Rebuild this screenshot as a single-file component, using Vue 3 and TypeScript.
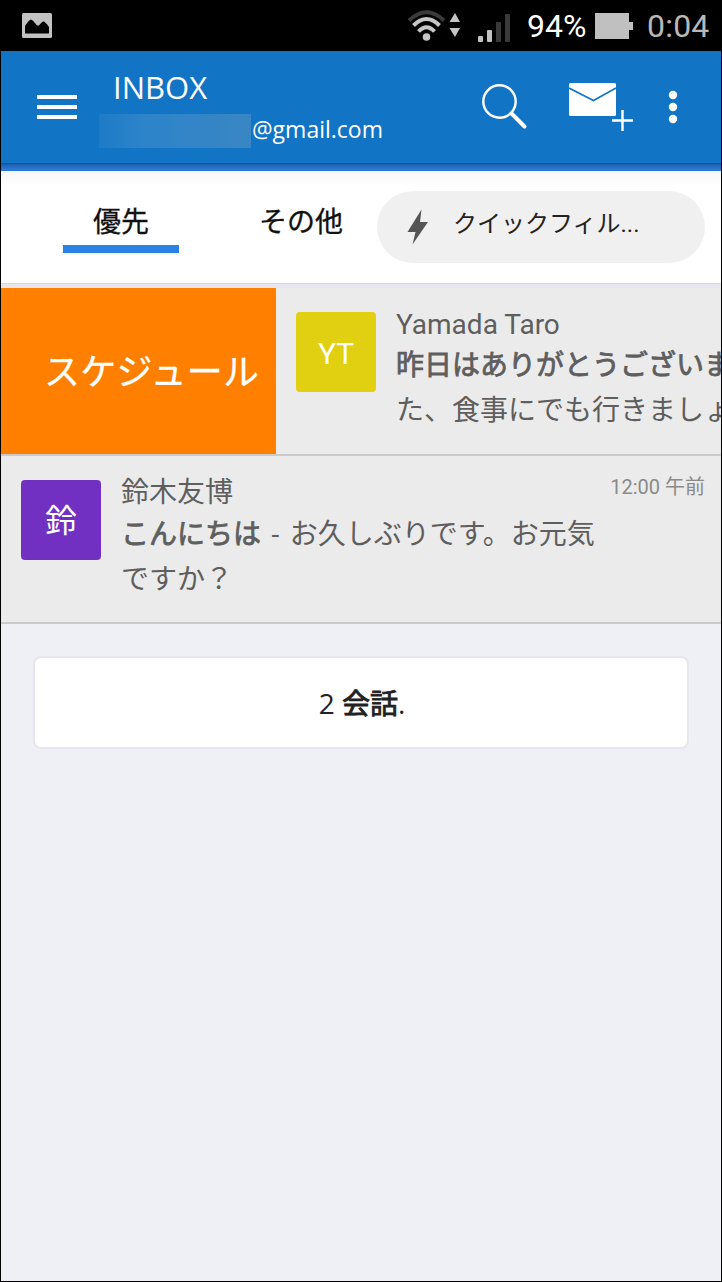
<script setup lang="ts">
interface Bar {
  x: number
  height: number
  active: boolean
}

const signalBars: Bar[] = [
  { x: 0, height: 6, active: true },
  { x: 9, height: 12, active: true },
  { x: 18, height: 20, active: false },
  { x: 27, height: 28, active: false },
]
</script>

<template>
  <div class="phone">
    <div class="status">
      <svg class="picture" width="30" height="25" viewBox="0 0 30 25">
        <rect width="30" height="25" rx="1.5" fill="#c2c2c2" />
        <path d="M3 20V13Q7 6.500 9 6.500Q10.500 6.500 15 12.500H17Q20 8.500 21.500 8.500Q23 8.500 27 14V20Q27 20.500 26 20.500H4Q3 20.500 3 20Z" fill="#000" />
      </svg>
      <div class="spacer"></div>
      <svg class="wifi" width="54" height="34" viewBox="0 0 54 34" fill="none">
        <path d="M2 12.500Q19.500 -4 37 12.500" stroke="#3a3a3a" stroke-width="4" />
        <path d="M6.500 17.500Q19.500 4.500 32.500 17.500" stroke="#c6c6c6" stroke-width="4" />
        <path d="M11.500 23.500Q19.500 15 27.500 23.500" stroke="#c6c6c6" stroke-width="4" />
        <circle cx="19.500" cy="29" r="3.800" fill="#c6c6c6" />
        <path d="M42.500 14L48 5L53 14ZM42.500 20H53L48 29Z" fill="#c6c6c6" />
      </svg>
      <svg class="signal" width="33" height="29" viewBox="0 0 33 29">
        <rect
          v-for="bar in signalBars"
          :key="bar.x"
          :x="bar.x"
          :y="28 - bar.height"
          width="5"
          :height="bar.height"
          rx="1"
          :fill="bar.active ? '#c2c2c2' : '#3a3a3a'"
        />
      </svg>
      <span class="percent">94%</span>
      <svg class="battery" width="38" height="26" viewBox="0 0 38 26">
        <path d="M0 0H34V9H38V17H34V26H0Z" fill="#c0c0c0" />
      </svg>
      <span class="clock">0:04</span>
    </div>

    <header class="header">
      <div class="menu"><i></i><i></i><i></i></div>
      <div class="account">
        <div class="folder">INBOX</div>
        <div class="email"><span class="masked"></span><span class="domain">@gmail.com</span></div>
      </div>
      <svg class="search" width="46" height="46" viewBox="0 0 46 46" fill="none" stroke="#fff">
        <circle cx="17.500" cy="17.500" r="16.200" stroke-width="2.400" />
        <path d="M29.500 29.500L42.500 42.500" stroke-width="4" stroke-linecap="round" />
      </svg>
      <svg class="compose" width="64" height="48" viewBox="0 0 64 48">
        <rect width="47" height="33" rx="1.500" fill="#fff" />
        <path d="M0 5L24.500 17.500L47 5" fill="none" stroke="#1274c4" stroke-width="1.600" />
        <path d="M43 37.500H64M53.500 27V48" stroke="#fff" stroke-width="2.400" />
      </svg>
      <svg class="more" width="10" height="34" viewBox="0 0 10 34" fill="#fff">
        <circle cx="5" cy="5" r="4.200" />
        <circle cx="5" cy="17" r="4.200" />
        <circle cx="5" cy="29" r="4.200" />
      </svg>
    </header>
    <div class="strip"></div>

    <nav class="tabs">
      <div class="tab active">優先</div>
      <div class="tab other">その他</div>
      <div class="filter">
        <svg width="22" height="36" viewBox="0 0 22 36">
          <path d="M14.500 0.500L0.500 23H8.500L5.500 35.500L21 13H13Z" fill="#555" />
        </svg>
        <span>クイックフィル...</span>
      </div>
    </nav>

    <div class="row swiped">
      <div class="schedule"><span>スケジュール</span></div>
      <div class="avatar yellow">YT</div>
      <div class="content">
        <div class="name latin">Yamada Taro</div>
        <div class="text"><b>昨日はありがとうございま</b><br />た、食事にでも行きましょ</div>
      </div>
    </div>
    <div class="row">
      <div class="avatar purple">鈴</div>
      <div class="content">
        <div class="name">鈴木友博</div>
        <div class="text"><b>こんにちは</b> - お久しぶりです。お元気<br />ですか？</div>
      </div>
      <time class="time">12:00 午前</time>
    </div>

    <div class="count"><span>2 <b>会話</b>.</span></div>
  </div>
</template>

<style>
html,
body {
  margin: 0;
  background: #000;
}
</style>

<style scoped>
.phone {
  box-sizing: border-box;
  width: 722px;
  height: 1282px;
  overflow: hidden;
  border: 1px solid #000;
  border-top: 0;
  background: #eff0f6;
  font-family: Roboto, "Noto Sans CJK JP", sans-serif;
  font-size: 28px;
  color: #5e5e5e;
  white-space: nowrap;
}
svg {
  display: block;
  flex: none;
}
.status {
  display: flex;
  align-items: flex-start;
  height: 51px;
  background: #000;
  font-size: 32px;
  line-height: 52px;
}
.picture {
  margin: 13px 0 0 21px;
}
.spacer {
  flex: 1;
}
.wifi {
  margin: 8px 17px 0 0;
}
.signal {
  margin: 14px 16px 0 0;
}
.percent {
  width: 68px;
  color: #fff;
}
.battery {
  margin: 13px 14px 0 0;
}
.clock {
  width: 74px;
  color: #b8b8b8;
  letter-spacing: 0.2px;
}
.header {
  display: flex;
  align-items: flex-start;
  height: 112px;
  background: #1274c4;
  color: #fff;
  font-family: "Open Sans", sans-serif;
}
.menu {
  display: flex;
  flex-direction: column;
  gap: 6px;
  width: 40px;
  margin: 44px 22px 0 36px;
}
.menu i {
  height: 4px;
  background: #fff;
}
.account {
  width: 382px;
  padding-top: 17px;
}
.folder {
  height: 46px;
  padding-left: 14px;
  font-size: 31px;
  line-height: 38px;
}
.email {
  display: flex;
  height: 34px;
  font-size: 23px;
  line-height: 31px;
}
.masked {
  width: 152px;
  background: linear-gradient(90deg, #1e7bc7, #2d84ca 30%, #3986c4);
}
.domain {
  padding-left: 1px;
}
.search {
  margin: 33px 41px 0 1px;
}
.compose {
  margin: 32px 35px 0 0;
}
.more {
  margin-top: 39px;
}
.strip {
  height: 8px;
  background: linear-gradient(#174a8c 0, #1f5ca8 1px, #2568b8 3px, #2878d5 6px);
}
.tabs {
  box-sizing: border-box;
  display: flex;
  align-items: flex-start;
  height: 117px;
  padding: 20px 16px 0 62px;
  border-bottom: 4px solid #e6e6ec;
  background: linear-gradient(#f6f6f6, #fff 14px);
  box-shadow: inset 0 -1px #d6d6dd;
  color: #111;
}
.tab {
  box-sizing: border-box;
  height: 62px;
  line-height: 63px;
  -webkit-text-stroke: 0.3px currentColor;
}
.active {
  width: 116px;
  border-bottom: 8px solid #2a82e4;
  text-align: center;
}
.other {
  width: 198px;
  padding-left: 80px;
}
.filter {
  box-sizing: border-box;
  display: flex;
  flex: 1;
  gap: 24px;
  height: 72px;
  padding: 18px 0 0 30px;
  border-radius: 36px;
  background: #f0f0f0;
  color: #222;
  font-size: 24px;
  line-height: 30px;
}
.row {
  box-sizing: border-box;
  display: flex;
  align-items: flex-start;
  height: 168px;
  overflow: hidden;
  border-bottom: 2px solid #cacaca;
  background: #ebebeb;
}
.schedule {
  box-sizing: border-box;
  flex: none;
  width: 275px;
  height: 166px;
  padding-left: 43px;
  background: #ff8000;
  color: #fff;
  font-size: 36px;
  letter-spacing: 0.3px;
  line-height: 171px;
  -webkit-text-stroke: 0.3px currentColor;
}
.avatar {
  flex: none;
  width: 80px;
  height: 80px;
  margin: 24px 20px 0;
  border-radius: 4px;
  color: #fff;
  font-size: 32px;
  line-height: 83px;
  text-align: center;
}
.yellow {
  background: #e1cf12;
  font-size: 30px;
}
.purple {
  background: #7230c2;
}
.content {
  flex: none;
  padding-top: 14px;
}
.name {
  height: 42px;
  line-height: 46px;
}
.latin {
  height: 41px;
  line-height: 46px;
}
.text {
  line-height: 45px;
  word-spacing: 3.5px;
}
b {
  font-weight: 400;
  -webkit-text-stroke: 0.8px currentColor;
}
.time {
  margin: 19px 16px 0 auto;
  color: #8a8a8a;
  font-size: 20px;
  line-height: 24px;
}
.count {
  box-sizing: border-box;
  height: 93px;
  margin: 32px;
  padding-left: 2px;
  border: 2px solid #e6e6ec;
  border-radius: 8px;
  background: #fff;
  color: #222;
  font-family: "Open Sans", "Noto Sans CJK JP", sans-serif;
  line-height: 90px;
  text-align: center;
}
</style>
